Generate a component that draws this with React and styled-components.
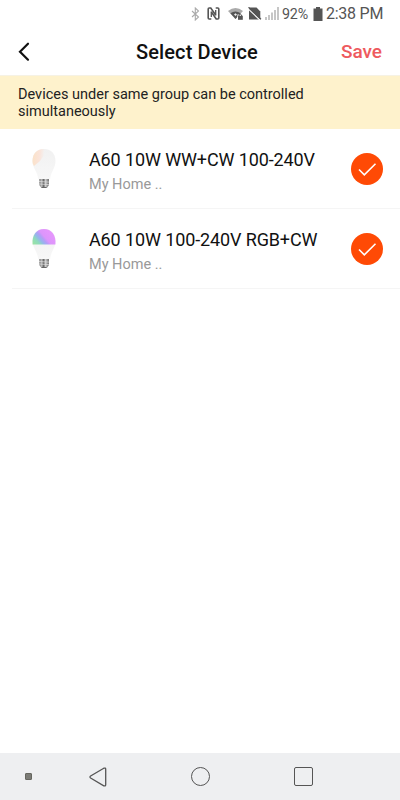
import React, { useState } from 'react'
import styled, { createGlobalStyle } from 'styled-components'

const devices = [
  { id: 1, name: "A60 10W WW+CW 100-240V", room: "My Home ..", type: "white" },
  { id: 2, name: "A60 10W 100-240V RGB+CW", room: "My Home ..", type: "rgb" }
]

const StatusIcons = () => (
  <>
    <Icon width="9" height="14" viewBox="0 0 9 14" fill="none" stroke="#aaa" strokeWidth="1.1">
      <path d="M1 4l6.5 6-3.2 3V1l3.2 3L1 10" />
    </Icon>
    <Icon $left="7px" width="13" height="13" viewBox="0 0 13 13" fill="none" stroke="#555">
      <path d="M4.300 12H2.200q-1 0-1-1V2q0-1 1-1h1.600l4.800 7" strokeWidth="1.6" />
      <path d="M8.700 1h2.100q1 0 1 1v9q0 1-1 1H9.200L4.400 5" strokeWidth="1.6" />
      <path d="M4.300 4.500V10M8.700 3v5.500" strokeWidth="1.3" />
    </Icon>
    <Icon $left="8px" width="16" height="13" viewBox="0 0 16 13">
      <path d="M0 4Q7.500-2 15 4l-7.500 8z" fill="#aaa" />
      <path d="M2.400 6.200q5.100-3.400 10.200 0L7.500 12z" fill="#555" />
      <path d="M6 7.500l1.500-1.200L9 7.500 7.500 9z" fill="#eee" />
      <path d="M9.400 7.500h6.100V13H9.400z" fill="#fff" />
      <path d="M11 9.200V8q1.300-1.600 2.600 0v1.200" fill="none" stroke="#555" />
      <rect x="10" y="8.800" width="4.800" height="4" fill="#555" />
    </Icon>
    <Icon $left="4px" width="14" height="13" viewBox="0 0 14 13">
      <path d="M1 0.500h7.500l3.800 4V12.500H1z" fill="#555" />
      <path d="M0 1.600l12.500 12" stroke="#fff" strokeWidth="1.2" />
      <path d="M0.500 0.300L13 12.300" stroke="#555" strokeWidth="1.2" />
    </Icon>
    <Icon $left="3px" width="14" height="13" viewBox="0 0 14 13" fill="#c6c6c6">
      <path d="M0 10h2v3H0zM3 8h2v5H3zM6 5.500h2V13H6zM9 3h2v10H9zM12 0h2v13h-2z" />
    </Icon>
  </>
)

const Bulb = ({ type }) => (
  <svg width="26" height="42" viewBox="0 0 26 42">
    <defs>
      <linearGradient id="glass" x1="0" y1="0" x2="0" y2="1">
        <stop offset="0" stopColor="#f1f1f1" />
        <stop offset="1" stopColor="#f7f7f7" />
      </linearGradient>
      <linearGradient id="warm" x1="0" y1="0.4" x2="1" y2="0.5">
        <stop offset="0" stopColor="#fbe2c8" />
        <stop offset="0.6" stopColor="#fae4da" />
        <stop offset="1" stopColor="#f3f1f0" />
      </linearGradient>
      <linearGradient id="rgb" gradientUnits="userSpaceOnUse" x1="2" y1="16" x2="17" y2="3">
        <stop offset="0" stopColor="#9be3a4" />
        <stop offset="0.25" stopColor="#8edbbb" />
        <stop offset="0.42" stopColor="#96b5ec" />
        <stop offset="0.56" stopColor="#b59df6" />
        <stop offset="0.68" stopColor="#dc95fb" />
        <stop offset="1" stopColor="#e496fc" />
      </linearGradient>
      <linearGradient id="base">
        <stop offset="0" stopColor="#777" />
        <stop offset="0.25" stopColor="#bbb" />
        <stop offset="0.45" stopColor="#666" />
        <stop offset="0.65" stopColor="#ccc" />
        <stop offset="1" stopColor="#666" />
      </linearGradient>
    </defs>
    <path d="M1.500 13C1.500 5 6.500 1 13 1s11.500 4 11.500 12c0 7-4.500 10-5.300 18H7.200C6.400 23 1.500 20 1.500 13z" fill="url(#glass)" />
    {type === "white" && <path d="M1.500 13C1.500 5 6.500 1 13 1l-.5 7L9 13l-6 5C2 16.500 1.500 15 1.500 13z" fill="url(#warm)" />}
    {type === "rgb" && <path d="M1.600 16.500C.7 7 5.500 1 13 1s12.300 6 11.400 15.500z" fill="url(#rgb)" />}
    <path d="M8.300 31h9.600v6l-2 3h-5.500l-2.100-3z" fill="url(#base)" />
    <path d="M8 33.500l10 .6M8 36l10 .6" stroke="#e2e2e2" strokeWidth="0.7" />
    <path d="M10.500 39.500h5" stroke="#666" />
  </svg>
)

const DeviceRow = ({ device }) => {
  const [checked, setChecked] = useState(true)

  return (
    <Row>
      <Bulb type={device.type} />
      <RowText>
        <DeviceName>{device.name}</DeviceName>
        <Room>{device.room}</Room>
      </RowText>
      <Check $checked={checked} onClick={() => setChecked(!checked)} aria-label={device.name}>
        <svg width="32" height="32" viewBox="0 0 32 32" fill="none" stroke="#fff" strokeWidth="1.6">
          <path d="M8 16.500l5.300 5.300L24.500 10.800" />
        </svg>
      </Check>
    </Row>
  )
}

export default function App() {
  return (
    <Screen>
      <GlobalStyle />
      <StatusBar>
        <StatusIcons />
        <Percent>92%</Percent>
        <Icon $left="4px" width="10" height="14" viewBox="0 0 10 14" fill="#555">
          <path d="M3 0h4v1.500h2.500V14h-9V1.500H3z" />
        </Icon>
        <Clock>2:38 PM</Clock>
      </StatusBar>
      <Header>
        <BackButton aria-label="Back">
          <svg width="12" height="20" viewBox="0 0 12 20" fill="none" stroke="#111" strokeWidth="2.2" strokeLinecap="round">
            <path d="M10 1.700L2 9.700l8 8" />
          </svg>
        </BackButton>
        <Title>Select Device</Title>
        <SaveButton>Save</SaveButton>
      </Header>
      <Notice>Devices under same group can be controlled simultaneously</Notice>
      <List>
        {devices.map((device) => <DeviceRow key={device.id} device={device} />)}
      </List>
      <NavBar>
        <NavDot />
        <svg width="18" height="20" viewBox="0 0 18 20" fill="none" stroke="#555" strokeWidth="1.3">
          <path d="M14.800 1.200L1.600 9q-1.300 1 0 2l13.200 7.800q1.900.6 1.900-1V2.200q0-1.600-1.900-1z" />
        </svg>
        <HomeShape />
        <RecentShape />
      </NavBar>
    </Screen>
  )
}

const GlobalStyle = createGlobalStyle`
* {
  box-sizing: border-box;
}
body {
  margin: 0;
  background: #fff;
  font-family: Roboto, sans-serif;
}
button {
  border: none;
  padding: 0;
  background: none;
  font-family: inherit;
}
`

const Screen = styled.div`
display: flex;
flex-direction: column;
height: 100vh;
background: #fff;
`

const StatusBar = styled.div`
display: flex;
align-items: center;
height: 28px;
padding: 0 0 1px 191px;
color: #555;
white-space: nowrap;
`

const Icon = styled.svg`
flex: none;
margin-left: ${props => props.$left || "0"};
`

const Percent = styled.span`
width: 27px;
margin-left: 3px;
font-size: 14.3px;
letter-spacing: -0.2px;
`

const Clock = styled.span`
margin-left: 3px;
font-size: 16px;
letter-spacing: -0.25px;
`

const Header = styled.header`
display: grid;
grid-template-columns: 80px 1fr 80px;
align-items: center;
height: 48px;
padding: 0 18px;
border-bottom: 1px solid #f6f2e4;
`

const BackButton = styled.button`
display: flex;
justify-self: start;
`

const Title = styled.h1`
margin: 0 0 0 -6px;
font-size: 20px;
font-weight: 500;
line-height: 24px;
letter-spacing: 0.1px;
text-align: center;
white-space: nowrap;
color: #111;
`

const SaveButton = styled.button`
justify-self: end;
font-size: 19px;
font-weight: 500;
line-height: 24px;
color: #ee5a5e;
`

const Notice = styled.p`
height: 53px;
margin: 0;
padding: 10px 80px 0 18px;
background: #fef2cc;
color: #222;
font-size: 14.5px;
line-height: 17px;
`

const List = styled.div`
flex: 1;
padding-left: 12px;
`

const Row = styled.div`
display: flex;
align-items: center;
height: 80px;
padding: 0 17px 0 19px;
border-bottom: 1px solid #f5f5f5;
`

const RowText = styled.div`
flex: 1;
margin-left: 32px;
padding-top: 7px;
`

const DeviceName = styled.div`
font-size: 18px;
line-height: 24px;
letter-spacing: -0.12px;
white-space: nowrap;
color: #111;
`

const Room = styled.div`
font-size: 14.5px;
line-height: 25px;
color: #999;
`

const Check = styled.button`
display: flex;
width: 32px;
height: 32px;
border-radius: 50%;
background: ${props => props.$checked ? "#ff4a05" : "#ddd"};
`

const NavBar = styled.nav`
display: flex;
align-items: center;
height: 47px;
padding-left: 25px;
background: #eeeff1;
`

const NavDot = styled.span`
width: 7px;
height: 7px;
margin-right: 57px;
border: 1px solid #66665f;
border-radius: 1px;
background: #7b7b76;
`

const HomeShape = styled.span`
width: 19px;
height: 19px;
margin-left: 84px;
border: 1.4px solid #555;
border-radius: 50%;
`

const RecentShape = styled(HomeShape)`
border-radius: 2px;
`
